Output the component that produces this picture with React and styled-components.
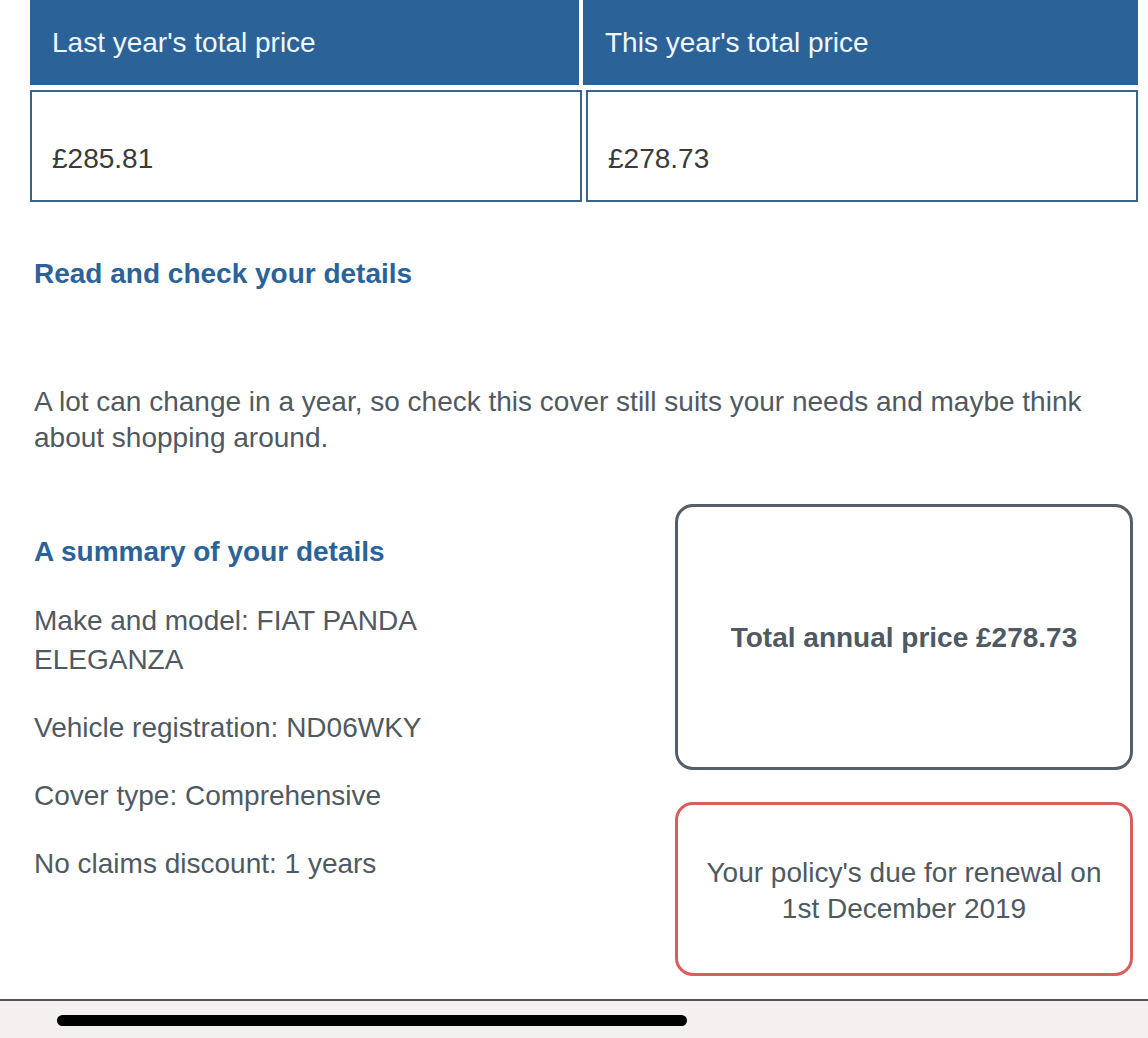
import React from "react";
import styled, {createGlobalStyle} from "styled-components";

const Blue = "#2b6399";
const Slate = "#4f5962";

const GlobalStyle = createGlobalStyle`
  html, body {
    margin: 0;
    padding: 0;
    background: #ffffff;
    font-family: "Liberation Sans", Arial, Helvetica, sans-serif;
  }
`;

const Page = styled.div`
  width: 1148px;
  height: 1038px;
  display: flex;
  flex-direction: column;
  overflow: hidden;
`;

const PriceTable = styled.div`
  display: grid;
  grid-template-columns: 549px 555px;
  grid-template-rows: 85px 112px;
  column-gap: 4px;
  row-gap: 5px;
  margin: 0 10px 0 30px;
`;

const HeadCell = styled.div`
  display: flex;
  align-items: center;
  padding: 0 22px;
  background: ${Blue};
  color: #f1f7fc;
  font-size: 28px;
`;

const ValueCell = styled.div`
  box-sizing: border-box;
  width: 552px;
  margin-left: ${({$shift}) => ($shift ? "3px" : "0")};
  padding: 51px 20px 0;
  border: 2px solid #3a6489;
  color: #3a3a3a;
  font-size: 28px;
  line-height: 32px;
`;

const Content = styled.div`
  padding: 0 15px 0 34px;
`;

const SectionTitle = styled.h2`
  margin: ${({$top}) => $top || "0"} 0 0;
  color: ${Blue};
  font-size: 28px;
  font-weight: 700;
  line-height: 32px;
`;

const Intro = styled.p`
  margin: 94px 0 0;
  color: ${Slate};
  font-size: 28px;
  line-height: 36px;
`;

const Summary = styled.div`
  display: grid;
  grid-template-columns: 460px 458px;
  justify-content: space-between;
  margin-top: 48px;
`;

const DetailList = styled.div`
  display: flex;
  flex-direction: column;
  gap: 29px;
  padding-top: 32px;
`;

const Detail = styled.div`
  color: ${Slate};
  font-size: 28px;
  line-height: 39px;

  &:first-of-type {
    margin-top: 4px;
  }
`;

const Aside = styled.div`
  display: flex;
  flex-direction: column;
  gap: 32px;
`;

const Card = styled.div`
  box-sizing: border-box;
  height: ${({$height}) => $height}px;
  display: flex;
  align-items: center;
  justify-content: center;
  padding: ${({$bold}) => ($bold ? "2px" : "4px")} 24px 0;
  border: 3px solid ${({$tone}) => ($tone === "alert" ? "#d65e5b" : "#555e66")};
  border-radius: 18px;
  color: ${Slate};
  font-size: 28px;
  font-weight: ${({$bold}) => ($bold ? 700 : 400)};
  line-height: 36px;
  text-align: center;
`;

const HomeBar = styled.div`
  margin-top: auto;
  height: 39px;
  padding-top: 14px;
  box-sizing: border-box;
  border-top: 2px solid #545454;
  background: #f3f0ef;
`;

const Indicator = styled.div`
  width: 630px;
  height: 11px;
  margin-left: 57px;
  border-radius: 6px;
  background: #000000;
`;

const App = () => {
  return (
    <Page>
      <GlobalStyle/>
      <PriceTable>
        <HeadCell>Last year's total price</HeadCell>
        <HeadCell>This year's total price</HeadCell>
        <ValueCell>£285.81</ValueCell>
        <ValueCell $shift>£278.73</ValueCell>
      </PriceTable>

      <Content>
        <SectionTitle $top="56px">Read and check your details</SectionTitle>
        <Intro>
          A lot can change in a year, so check this cover still suits your needs and maybe think
          about shopping around.
        </Intro>

        <Summary>
          <DetailList>
            <SectionTitle>A summary of your details</SectionTitle>
            <Detail>Make and model: FIAT PANDA ELEGANZA</Detail>
            <Detail>Vehicle registration: ND06WKY</Detail>
            <Detail>Cover type: Comprehensive</Detail>
            <Detail>No claims discount: 1 years</Detail>
          </DetailList>
          <Aside>
            <Card $height={266} $bold>Total annual price £278.73</Card>
            <Card $height={174} $tone="alert">
              Your policy's due for renewal on 1st December 2019
            </Card>
          </Aside>
        </Summary>
      </Content>

      <HomeBar>
        <Indicator/>
      </HomeBar>
    </Page>
  );
};

export default App;
